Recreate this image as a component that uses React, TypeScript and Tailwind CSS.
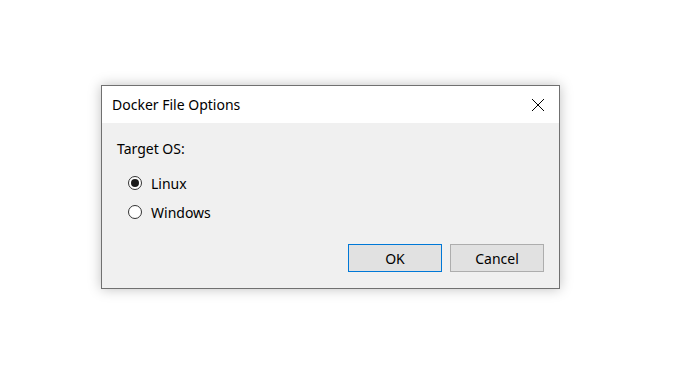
export default function App() {
  return (
    <div className="h-[373px] w-[676px] bg-white pl-[101px] pt-[85px] font-['Noto_Sans',sans-serif] text-black">
      <div className="flex h-[204px] w-[459px] flex-col border border-[#707070] bg-[#f0f0f0] shadow-[0_0_12px_rgba(0,0,0,0.25)]">
        <div className="flex h-[37px] items-center justify-between bg-white pl-[10px] pr-[14px]">
          <span className="text-[14px]">Docker File Options</span>
          <svg width="14" height="14" viewBox="0 0 14 14">
            <path d="M1 1L13 13M13 1L1 13" stroke="#000" strokeWidth="1" />
          </svg>
        </div>
        <div className="flex flex-1 flex-col px-[15px] pt-[15px]">
          <div className="text-[14px] leading-[22px]">Target OS:</div>
          <div className="mt-[12px] flex flex-col gap-[7px] pl-[11px]">
            <label className="flex h-[22px] items-center gap-[9px] text-[14px]">
              <span className="flex h-[14px] w-[14px] items-center justify-center rounded-full border border-[#333] bg-white">
                <span className="h-[8px] w-[8px] rounded-full bg-[#1a1a1a]" />
              </span>
              Linux
            </label>
            <label className="flex h-[22px] items-center gap-[9px] text-[14px]">
              <span className="h-[14px] w-[14px] rounded-full border border-[#333] bg-white" />
              Windows
            </label>
          </div>
          <div className="mt-[21px] flex justify-end gap-[8px]">
            <button className="h-[28px] w-[94px] border border-[#0078d7] bg-[#e1e1e1] text-[14px]">OK</button>
            <button className="h-[28px] w-[94px] border border-[#adadad] bg-[#e1e1e1] text-[14px]">Cancel</button>
          </div>
        </div>
      </div>
    </div>
  );
}
